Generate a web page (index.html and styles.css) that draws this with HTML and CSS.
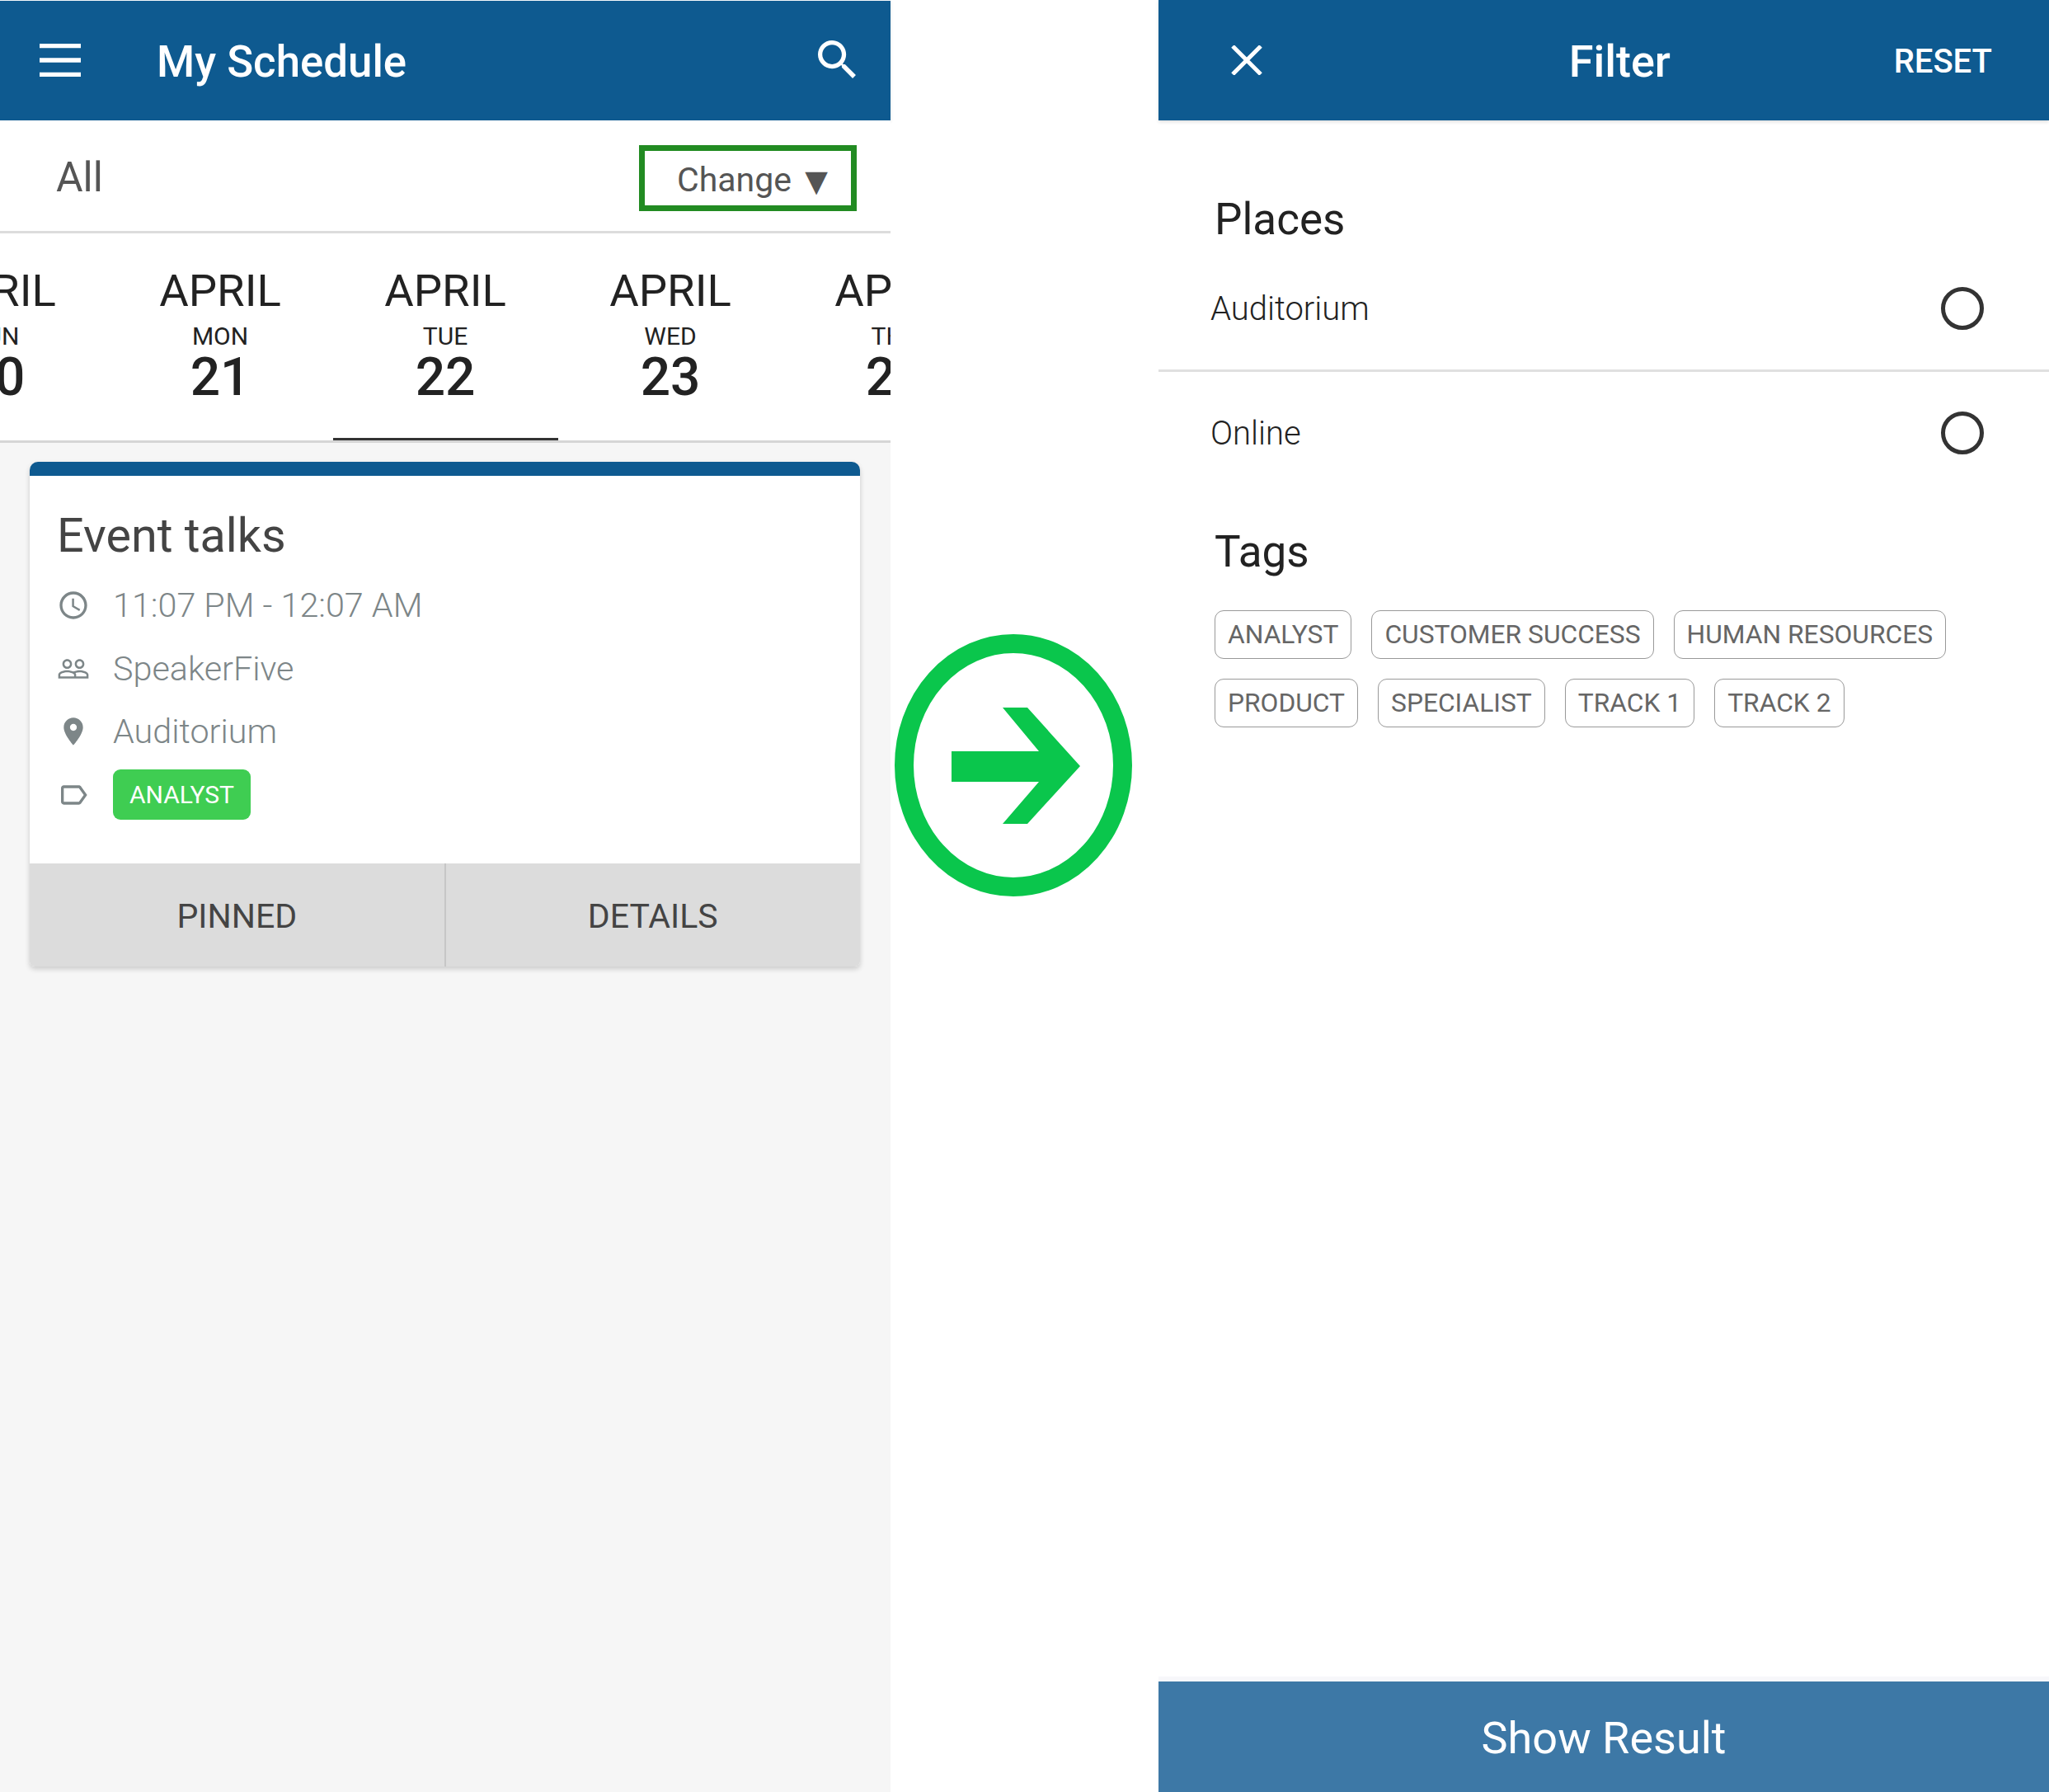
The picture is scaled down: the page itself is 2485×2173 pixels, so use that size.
FILE: index.html
```html
<!DOCTYPE html>
<html lang="en">
<head>
<meta charset="utf-8">
<title>My Schedule and Filter</title>
<link rel="stylesheet" href="styles.css">
</head>
<body>
<div class="page">
  <section class="panel schedule">
    <header class="appbar schedule-bar">
      <svg class="menu-icon" viewBox="0 0 50 40"><path d="M0 2.500h50M0 20h50M0 37.500h50"/></svg>
      <h1 class="appbar-title">My Schedule</h1>
      <svg class="search-icon" viewBox="3 3 17.500 17.500"><path d="M15.500 14h-.79l-.28-.27C15.410 12.590 16 11.110 16 9.500 16 5.910 13.090 3 9.500 3S3 5.910 3 9.500 5.910 16 9.500 16c1.610 0 3.090-.59 4.230-1.570l.27.28v.79l5 4.990L20.490 19l-4.990-5zm-6 0C7.010 14 5 11.990 5 9.500S7.010 5 9.500 5 14 7.010 14 9.500 11.990 14 9.500 14z"/></svg>
    </header>
    <div class="filter-row">
      <span class="filter-value">All</span>
      <button class="change-btn">Change <span class="caret">▼</span></button>
    </div>
    <nav class="dates">
      <div class="date"><span class="month">APRIL</span><span class="day">SUN</span><span class="num">20</span></div>
      <div class="date"><span class="month">APRIL</span><span class="day">MON</span><span class="num">21</span></div>
      <div class="date active"><span class="month">APRIL</span><span class="day">TUE</span><span class="num">22</span></div>
      <div class="date"><span class="month">APRIL</span><span class="day">WED</span><span class="num">23</span></div>
      <div class="date"><span class="month">APRIL</span><span class="day">THU</span><span class="num">24</span></div>
    </nav>
    <article class="card">
      <div class="card-body">
        <h2 class="card-title">Event talks</h2>
        <div class="meta">
          <svg class="meta-icon" viewBox="0 0 24 24"><path d="M11.990 2C6.470 2 2 6.480 2 12s4.470 10 9.990 10C17.520 22 22 17.520 22 12S17.520 2 11.990 2zM12 20c-4.420 0-8-3.580-8-8s3.580-8 8-8 8 3.580 8 8-3.580 8-8 8zm.5-13H11v6l5.250 3.150.75-1.230-4.500-2.670z"/></svg>
          <span>11:07 PM - 12:07 AM</span>
        </div>
        <div class="meta">
          <svg class="meta-icon" viewBox="0 0 24 24"><path d="M16.500 13c-1.200 0-3.070.34-4.500 1-1.430-.67-3.300-1-4.500-1C5.330 13 1 14.080 1 16.250V19h22v-2.750c0-2.170-4.330-3.250-6.500-3.250zm-4 4.500h-10v-1.250c0-.54 2.560-1.750 5-1.750s5 1.210 5 1.750v1.250zm9 0H14v-1.250c0-.46-.2-.86-.52-1.220.88-.3 1.960-.53 3.020-.53 2.440 0 5 1.210 5 1.750v1.250zM7.500 12c1.930 0 3.500-1.570 3.500-3.500S9.430 5 7.500 5 4 6.570 4 8.500 5.570 12 7.500 12zm0-5.500c1.100 0 2 .9 2 2s-.9 2-2 2-2-.9-2-2 .9-2 2-2zm9 5.500c1.930 0 3.500-1.570 3.500-3.500S18.430 5 16.500 5 13 6.570 13 8.500s1.570 3.500 3.500 3.500zm0-5.500c1.100 0 2 .9 2 2s-.9 2-2 2-2-.9-2-2 .9-2 2-2z"/></svg>
          <span>SpeakerFive</span>
        </div>
        <div class="meta">
          <svg class="meta-icon" viewBox="0 0 24 24"><path d="M12 2C8.130 2 5 5.130 5 9c0 5.250 7 13 7 13s7-7.750 7-13c0-3.870-3.130-7-7-7zm0 9.500c-1.380 0-2.500-1.120-2.500-2.500s1.120-2.500 2.500-2.500 2.500 1.120 2.500 2.500-1.120 2.500-2.500 2.500z"/></svg>
          <span>Auditorium</span>
        </div>
        <div class="meta">
          <svg class="meta-icon" viewBox="0 0 24 24"><path d="M17.630 5.840C17.270 5.330 16.670 5 16 5L5 5.010C3.900 5.010 3 5.900 3 7v10c0 1.100.9 1.990 2 1.990L16 19c.67 0 1.270-.33 1.630-.84L22 12l-4.370-6.160zM16 17H5V7h11l3.550 5L16 17z"/></svg>
          <span class="tag-solid">ANALYST</span>
        </div>
      </div>
      <div class="card-actions">
        <button class="card-btn">PINNED</button>
        <button class="card-btn">DETAILS</button>
      </div>
    </article>
  </section>

  <div class="gutter">
    <svg class="arrow" viewBox="0 0 288 318">
      <ellipse class="arrow-ring" cx="144" cy="159" rx="132.500" ry="147.500"/>
      <path class="arrow-head" d="M69 142H175L131 89H161L225 160L161 230H131L175 179H69Z"/>
    </svg>
  </div>

  <section class="panel filter">
    <header class="appbar filter-bar">
      <svg class="close-icon" viewBox="0 0 38 36"><path d="M2 1L36 35M36 1L2 35"/></svg>
      <h1 class="filter-title">Filter</h1>
      <span class="reset">RESET</span>
    </header>
    <h2 class="group-title places-title">Places</h2>
    <div class="option first"><span>Auditorium</span><span class="radio"></span></div>
    <div class="option"><span>Online</span><span class="radio"></span></div>
    <h2 class="group-title tags-title">Tags</h2>
    <div class="chips">
      <span class="chip">ANALYST</span>
      <span class="chip">CUSTOMER SUCCESS</span>
      <span class="chip">HUMAN RESOURCES</span>
      <span class="chip">PRODUCT</span>
      <span class="chip">SPECIALIST</span>
      <span class="chip">TRACK 1</span>
      <span class="chip">TRACK 2</span>
    </div>
    <button class="show-result">Show Result</button>
  </section>
</div>
</body>
</html>
```
FILE: styles.css
```css
* { box-sizing: border-box; }
html, body { margin: 0; padding: 0; background: #fff; }
body { font-family: Roboto, "Liberation Sans", sans-serif; }
h1, h2 { margin: 0; font-weight: 400; }
button { font: inherit; border: 0; background: none; padding: 0; }

.page { display: flex; width: 2485px; height: 2173px; overflow: hidden; }
.panel { width: 1080px; flex: none; display: flex; flex-direction: column; height: 100%; }
.schedule { background: #f6f6f6; }
.filter { background: #fff; }
.gutter { width: 325px; flex: none; display: flex; justify-content: center; padding: 769px 27px 0 0; }

.appbar { height: 146px; flex: none; background: #0e5a90; color: #fff; display: flex; align-items: center; padding: 2px 42px 0 48px; box-shadow: 0 2px 4px rgba(0,0,0,.12); }
.schedule-bar { border-top: 1px solid #f2f6fa; }
.menu-icon { width: 50px; height: 40px; flex: none; fill: none; stroke: #fff; stroke-width: 5.500; margin-top: -4px; }
.appbar-title { font-size: 52.800px; font-weight: 500; margin-left: 92px; flex: 1; }
.search-icon { width: 46px; height: 46px; flex: none; fill: #fff; margin-top: -5px; }

.filter-row { height: 137px; flex: none; background: #fff; border-bottom: 3px solid #dcdcdc; display: flex; align-items: flex-start; justify-content: space-between; padding: 30px 41px 0 68px; }
.filter-value { font-size: 50px; color: #555; line-height: 78px; }
.change-btn { width: 264px; height: 80px; border: 7px solid #228b22; color: #555; font-size: 41px; line-height: 70px; text-align: left; padding-left: 39px; white-space: nowrap; }
.caret { font-size: 36px; font-family: "DejaVu Sans", sans-serif; margin-left: 6px; }

.dates { height: 254px; flex: none; background: #fff; border-bottom: 3px solid #d6d6d6; display: flex; justify-content: center; overflow: hidden; }
.date { width: 273px; flex: none; display: flex; flex-direction: column; align-items: center; padding-top: 39px; color: #222; height: 254px; }
.date.active { border-bottom: 4px solid #333; height: 252px; }
.month { font-size: 54.500px; line-height: 60px; }
.day { font-size: 30px; line-height: 36px; margin-top: 8px; }
.num { font-size: 64px; font-weight: 500; line-height: 68px; margin-top: -2px; }

.card { margin: 23px 37px 0 36px; background: #fff; border-top: 17px solid #0e5a90; border-radius: 10px 10px 6px 6px; box-shadow: 0 3px 6px rgba(0,0,0,.18); overflow: hidden; flex: none; }
.card-body { height: 470px; padding: 41px 33px 0 33px; }
.card-title { font-size: 57.500px; line-height: 64px; color: #444; margin-bottom: 14px; }
.meta { height: 76.500px; display: flex; align-items: center; font-size: 41.300px; font-weight: 300; color: #7d8688; }
.meta-icon { width: 40px; height: 40px; flex: none; margin-right: 28px; fill: #7d8688; }
.tag-solid { background: #3fcd52; color: #fff; font-size: 30px; font-weight: 400; height: 61px; line-height: 61px; padding: 0 20px; border-radius: 9px; }
.card-actions { display: flex; height: 125px; }
.card-btn { flex: 1; background: #dcdcdc; color: #444; font-size: 41px; padding-top: 2px; }
.card-btn + .card-btn { border-left: 2px solid #c6c6c6; }

.arrow { width: 288px; height: 318px; flex: none; }
.arrow-ring { fill: none; stroke: #0ac64c; stroke-width: 23; }
.arrow-head { fill: #0ac64c; }

.filter-bar { padding: 2px 69px 0 88px; justify-content: space-between; }
.close-icon { width: 38px; height: 36px; flex: none; fill: none; stroke: #fff; stroke-width: 5; margin-top: -3px; }
.filter-title { font-size: 54px; font-weight: 500; margin-left: 101px; }
.reset { font-size: 40px; font-weight: 500; }

.group-title { font-size: 53px; line-height: 60px; color: #222; padding-left: 68px; }
.places-title { margin-top: 90px; }
.tags-title { margin-top: 40px; }
.option { height: 148px; flex: none; display: flex; align-items: center; justify-content: space-between; padding: 0 79px 0 63px; font-size: 40px; font-weight: 300; color: #222; }
.option.first { height: 155px; padding-top: 4px; border-bottom: 3px solid #e0e0e0; }
.radio { width: 52px; height: 52px; border: 5px solid #333; border-radius: 50%; flex: none; }

.chips { display: flex; flex-wrap: wrap; gap: 24px 24px; padding: 41px 60px 0 68px; }
.chip { height: 59px; line-height: 58px; padding: 0 15px; border: 1.500px solid #999; border-radius: 11px; color: #666; font-size: 31.750px; white-space: nowrap; }

.show-result { margin-top: auto; height: 134px; flex: none; background: #3d78a6; color: #fff; font-size: 54px; padding-top: 3px; box-shadow: 0 -6px 0 #f7f7fa; }
```
